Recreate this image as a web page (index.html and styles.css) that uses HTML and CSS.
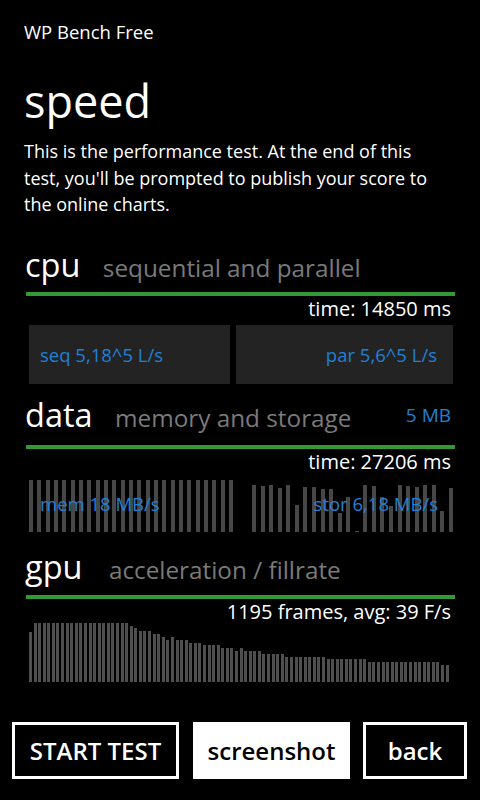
FILE: index.html
```html
<!DOCTYPE html>
<html lang="en">
<head>
    <meta charset="UTF-8">
    <meta name="viewport" content="width=device-width, initial-scale=1.0">
    <title>WP Bench Free</title>
    <link rel="stylesheet" href="styles.css">
</head>
<body>
    <div class="app-title">WP Bench Free</div>
    <h1 class="page-title">speed</h1>
    <p class="intro">This is the performance test. At the end of this test, you'll be prompted to publish your score to the online charts.</p>

    <section class="bench bench-cpu">
        <div class="bench-head">
            <span class="bench-name">cpu</span>
            <span class="bench-sub">sequential and parallel</span>
        </div>
        <div class="rule"></div>
        <div class="bench-info">time: 14850 ms</div>
        <div class="cpu-tiles">
            <div class="tile tile-left">seq 5,18^5 L/s</div>
            <div class="tile tile-right">par 5,6^5 L/s</div>
        </div>
    </section>

    <section class="bench bench-data">
        <div class="bench-head">
            <span class="bench-name">data</span>
            <span class="bench-sub">memory and storage</span>
            <span class="bench-extra">5 MB</span>
        </div>
        <div class="rule"></div>
        <div class="bench-info">time: 27206 ms</div>
        <div class="data-charts">
            <div class="chart chart-left">
                <div class="bars data-bars" id="mem-bars"></div>
                <div class="chart-label">mem 18 MB/s</div>
            </div>
            <div class="chart chart-right">
                <div class="bars data-bars" id="stor-bars"></div>
                <div class="chart-label label-right">stor 6,18 MB/s</div>
            </div>
        </div>
    </section>

    <section class="bench bench-gpu">
        <div class="bench-head">
            <span class="bench-name">gpu</span>
            <span class="bench-sub">acceleration / fillrate</span>
        </div>
        <div class="rule"></div>
        <div class="bench-info">1195 frames, avg: 39 F/s</div>
        <div class="bars gpu-bars" id="gpu-bars"></div>
    </section>

    <div class="actions">
        <button class="btn btn-start">START TEST</button>
        <button class="btn btn-filled">screenshot</button>
        <button class="btn btn-back">back</button>
    </div>

    <script src="script.js"></script>
</body>
</html>
```

FILE: styles.css
```css
body { margin: 0; padding: 0 24px; background: #000; color: #fff; font-family: "Open Sans", sans-serif; width: 432px; height: 800px; overflow: hidden; }

.app-title { padding-top: 20px; font-size: 18.5px; line-height: 24px; }
.page-title { margin: 32px 0 0; font-size: 45px; font-weight: normal; line-height: 50px; }
.intro { margin: 12px 6px 0 0; font-size: 18px; line-height: 26.7px; }

.bench-head { height: 40px; padding-left: 1px; font-size: 32.5px; line-height: 40px; white-space: nowrap; }
.bench-name { margin-right: 14px; }
.bench-sub { font-size: 24.3px; line-height: 24px; color: #7a7a7a; }
.bench-extra { float: right; margin-right: 5px; font-size: 19px; color: #1f80d6; }
.rule { height: 4px; margin: 7px 1px 0 2px; background: #339933; }
.bench-info { margin: 1px 5px 0 0; text-align: right; font-size: 20px; line-height: 24px; }

.bench-cpu { margin-top: 27px; }
.bench-data { margin-top: 11px; }
.bench-data .rule { margin-top: 10px; }
.bench-gpu { margin-top: 15px; }
.bench-gpu .bench-name { margin-right: 18px; }
.bench-gpu .rule { margin-top: 8px; }

.cpu-tiles { display: flex; gap: 6px; margin: 4px 0 0 5px; }
.tile { box-sizing: border-box; height: 59px; line-height: 59px; padding: 0 11px; background: #232323; color: #1f80d6; font-size: 18.5px; }
.tile-left { width: 201px; }
.tile-right { width: 217px; text-align: right; padding-right: 16px; }

.data-charts { display: flex; gap: 19px; margin: 6px 0 0 5px; }
.chart { display: grid; }
.chart > * { grid-area: 1 / 1; }
.chart-left { width: 204px; }
.chart-right { width: 201px; }
.chart-label { align-self: center; padding: 0 11px 6px; color: #1f80d6; font-size: 18.5px; }
.label-right { text-align: right; padding-right: 15px; }

.bars { display: flex; justify-content: space-between; align-items: flex-end; }
.bars span { background: #474747; }
.data-bars { height: 52px; }
.data-bars span { width: 4px; }
.gpu-bars { height: 60px; margin: -2px 7px 0 5px; }
.gpu-bars span { width: 3px; background: #4f4f4f; }

.actions { display: flex; gap: 14px; margin: 40px -12px 0 -12px; }
.btn { flex: none; box-sizing: border-box; height: 57px; border: 3px solid #fff; background: #000; color: #fff; font-family: "Open Sans", sans-serif; font-size: 24px; font-weight: 600; padding: 0; }
.btn-start { width: 167px; }
.btn-filled { width: 157px; background: #fff; color: #000; margin-right: -1px; }
.btn-back { width: 104px; }
```

FILE: script.js
```js
var mem = [];
for (var i = 0; i < 25; i++) mem.push(52);
var stor = [47, 46, 47, 44, 47, 27, 45, 45, 43, 43, 19, 35, 1, 47, 46, 35, 26, 47, 46, 45, 47, 47, 21, 44];
var gpu = [50];
function add(h, n) { for (var i = 0; i < n; i++) gpu.push(h); }
add(59, 21); add(56, 1); add(54, 1); add(51, 3); add(48, 2); add(45, 1); add(42, 1); add(45, 1);
add(42, 3); add(39, 3); add(37, 4); add(34, 3); add(31, 1); add(34, 1); add(31, 4); add(28, 5);
add(25, 9); add(23, 9); add(20, 16); add(17, 2);

function fill(id, list) {
    var el = document.getElementById(id);
    list.forEach(function (h) {
        var bar = document.createElement("span");
        bar.style.height = h + "px";
        el.appendChild(bar);
    });
}
fill("mem-bars", mem);
fill("stor-bars", stor);
fill("gpu-bars", gpu);
```
